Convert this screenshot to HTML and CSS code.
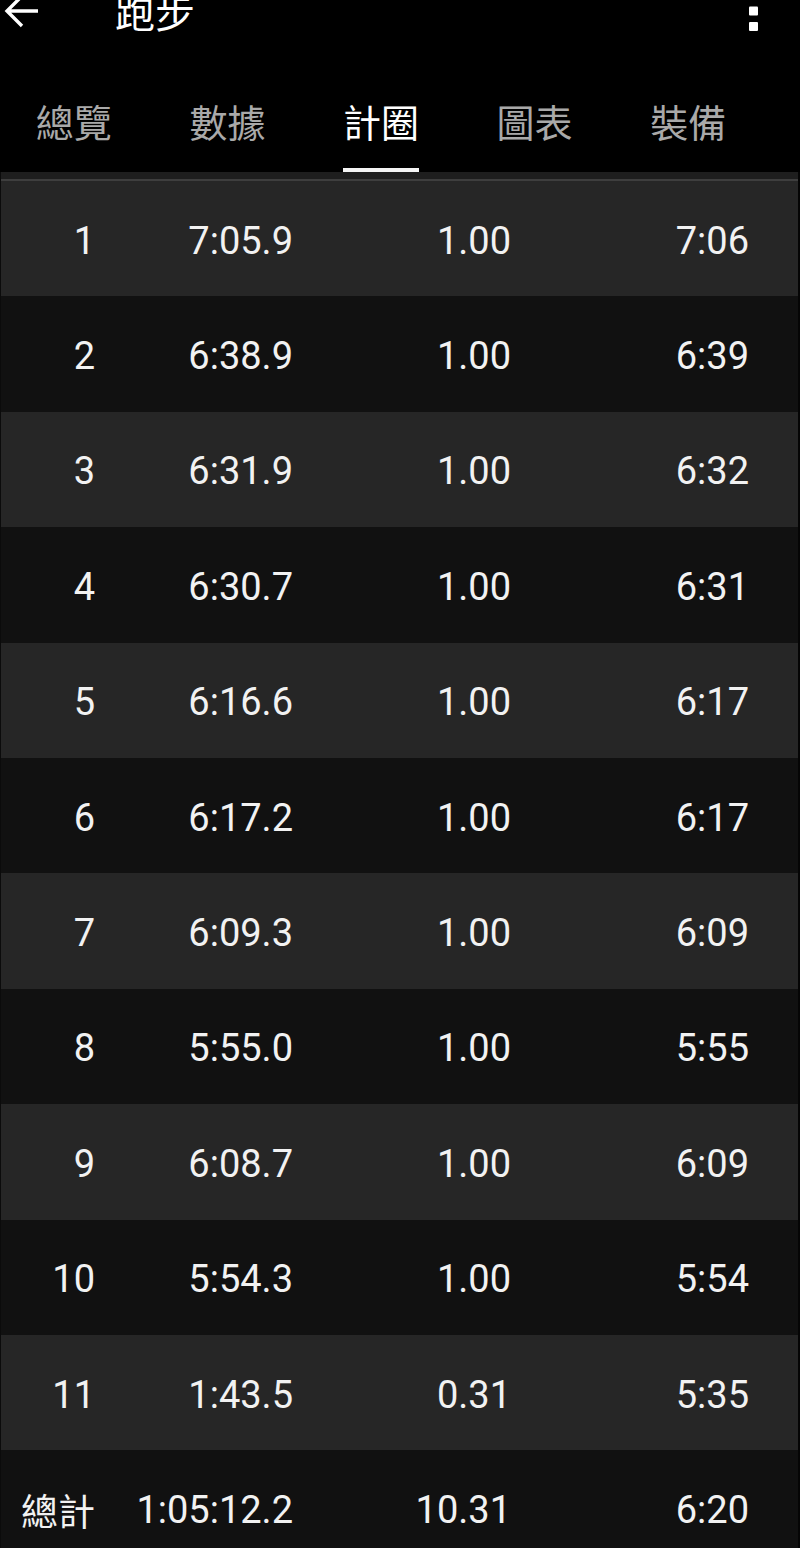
FILE: index.html
```html
<!DOCTYPE html>
<html lang="zh-Hant">
<head>
    <meta charset="UTF-8">
    <meta name="viewport" content="width=device-width, initial-scale=1.0">
    <title>跑步 - 計圈</title>
    <link rel="stylesheet" href="styles.css">
</head>
<body>
    <div class="appbar">
        <svg class="back" width="36" height="36" viewBox="0 0 36 36">
            <path d="M35 18H4M19 3L4 18L19 33" fill="none" stroke="#fff" stroke-width="3.4"/>
        </svg>
        <span class="title">跑步</span>
        <svg class="more" width="9" height="40" viewBox="0 0 9 40">
            <rect x="0" y="0" width="9" height="9" rx="1" fill="#fff"/>
            <rect x="0" y="15.5" width="9" height="9" rx="1" fill="#fff"/>
            <rect x="0" y="31" width="9" height="9" rx="1" fill="#fff"/>
        </svg>
    </div>

    <div class="tabs">
        <div class="tab"><div class="tab-inner"><span class="tab-label">總覽</span><span class="tab-indicator"></span></div></div>
        <div class="tab"><div class="tab-inner"><span class="tab-label">數據</span><span class="tab-indicator"></span></div></div>
        <div class="tab active"><div class="tab-inner"><span class="tab-label">計圈</span><span class="tab-indicator"></span></div></div>
        <div class="tab"><div class="tab-inner"><span class="tab-label">圖表</span><span class="tab-indicator"></span></div></div>
        <div class="tab"><div class="tab-inner"><span class="tab-label">裝備</span><span class="tab-indicator"></span></div></div>
    </div>

    <div class="laps">
        <div class="laps-top"></div>
        <div class="lap"><span>1</span><span>7:05.9</span><span>1.00</span><span>7:06</span></div>
        <div class="lap"><span>2</span><span>6:38.9</span><span>1.00</span><span>6:39</span></div>
        <div class="lap"><span>3</span><span>6:31.9</span><span>1.00</span><span>6:32</span></div>
        <div class="lap"><span>4</span><span>6:30.7</span><span>1.00</span><span>6:31</span></div>
        <div class="lap"><span>5</span><span>6:16.6</span><span>1.00</span><span>6:17</span></div>
        <div class="lap"><span>6</span><span>6:17.2</span><span>1.00</span><span>6:17</span></div>
        <div class="lap"><span>7</span><span>6:09.3</span><span>1.00</span><span>6:09</span></div>
        <div class="lap"><span>8</span><span>5:55.0</span><span>1.00</span><span>5:55</span></div>
        <div class="lap"><span>9</span><span>6:08.7</span><span>1.00</span><span>6:09</span></div>
        <div class="lap"><span>10</span><span>5:54.3</span><span>1.00</span><span>5:54</span></div>
        <div class="lap"><span>11</span><span>1:43.5</span><span>0.31</span><span>5:35</span></div>
        <div class="lap total"><span>總計</span><span>1:05:12.2</span><span>10.31</span><span>6:20</span></div>
    </div>
</body>
</html>
```

FILE: styles.css
```css
body {
    margin: 0;
    background: #000;
    color: #f2f2f2;
    font-family: Roboto, "Noto Sans CJK TC", sans-serif;
    overflow: hidden;
}
.appbar {
    display: flex;
    align-items: center;
    height: 60px;
    margin-top: -19px;
    padding: 0 42px 0 3px;
}
.back {
    flex: none;
}
.title {
    margin-left: 76px;
    font-family: "Noto Sans CJK TC", sans-serif;
    font-size: 40px;
    line-height: 1;
    color: #fff;
}
.more {
    margin-left: auto;
    flex: none;
}
.tabs {
    display: flex;
    margin: 31px 0 0 -3px;
    height: 100px;
}
.tab {
    flex: 0 0 153.6px;
    display: flex;
    justify-content: center;
}
.tab-inner {
    display: flex;
    flex-direction: column;
    height: 100px;
}
.tab-label {
    flex: 1;
    display: flex;
    align-items: center;
    font-family: "Noto Sans CJK TC", sans-serif;
    font-size: 38px;
    color: #a9a9a9;
}
.tab-indicator {
    height: 4px;
}
.tab.active .tab-label {
    color: #fff;
}
.tab.active .tab-indicator {
    background: #f4f4f4;
}
.laps {
    border-left: 1px solid #0b0b0b;
    border-right: 2px solid #050505;
}
.laps-top {
    height: 7px;
    background: #1e1e1e;
    border-bottom: 2px solid #3e3e3e;
}
.lap {
    display: grid;
    grid-template-columns: 94px 198px 218px 238px;
    align-items: center;
    box-sizing: border-box;
    height: 115.4px;
    padding-top: 4px;
    font-size: 38px;
    background: #262626;
}
.lap:nth-child(odd) {
    background: #111;
}
.lap span {
    text-align: right;
}
.total span:first-child {
    font-family: "Noto Sans CJK TC", sans-serif;
    font-size: 37px;
}
```
